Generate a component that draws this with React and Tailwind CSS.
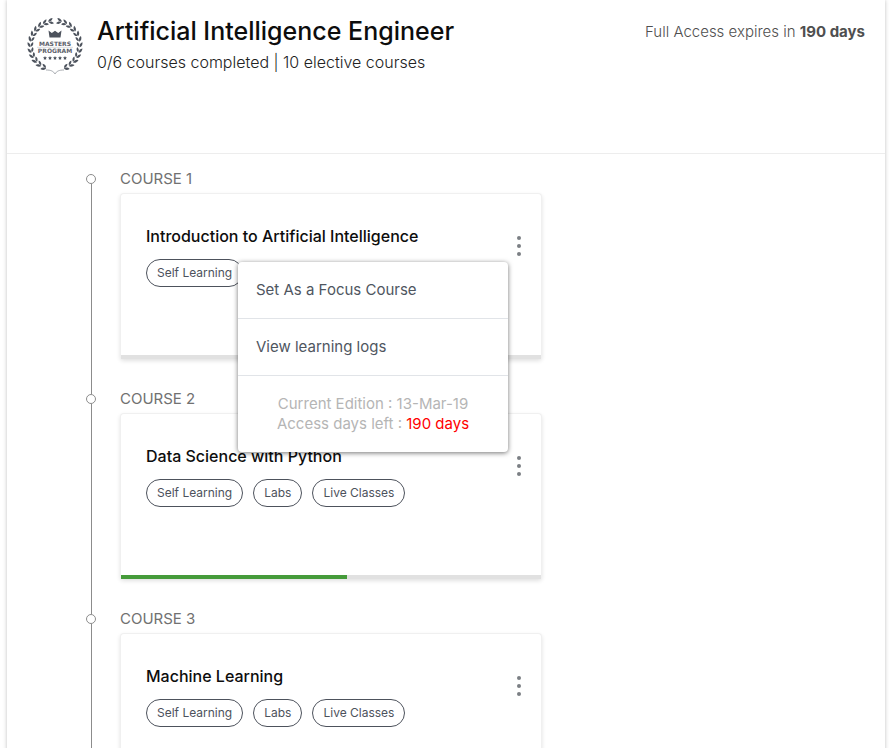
import React from "react";

const courses = [
  {
    title: "Introduction to Artificial Intelligence",
    tags: ["Self Learning"],
    progress: 0,
    menuOpen: true,
  },
  {
    title: "Data Science with Python",
    tags: ["Self Learning", "Labs", "Live Classes"],
    progress: 53.7,
  },
  {
    title: "Machine Learning",
    tags: ["Self Learning", "Labs", "Live Classes"],
    progress: 0,
  },
];

const leafAngles = [22, 35, 48, 61, 74, 87, 100, 113, 126, 139, 152, 165];

function LaurelSide() {
  return (
    <g>
      {leafAngles.map((angle) => (
        <g key={angle} transform={`rotate(${180 - angle} 28 28.5)`}>
          <path d="M28.500 3.800C27.600 1.400 25.400.9 23.200 1.300c.9 2.100 2.900 3.200 5.300 2.500z" />
          <path d="M28 4.300c-2-.5-3.800.5-4.700 2.500 2.200.5 4.100-.4 4.700-2.500z" />
        </g>
      ))}
    </g>
  );
}

function MastersBadge() {
  return (
    <svg viewBox="0 0 56 58" className="h-[58px] w-14 shrink-0" fill="#4d535d" role="img" aria-label="Masters Program">
      <g transform="translate(56 0) scale(-1 1)">
        <LaurelSide />
      </g>
      <LaurelSide />
      <path d="M19 53c5 0 7.500 1.200 9 4 1.500-2.800 4-4 9-4" fill="none" stroke="#8a8e95" strokeWidth="0.7" />
      <path d="M21.500 13.500l3.300 2.500L28 13.800l3.200 2.200 3.300-2.500-1 7h-11z" />
      <path d="M10 30.300h36" stroke="#b5b8bd" strokeWidth="0.5" />
      <g textAnchor="middle" fontFamily="'DejaVu Sans', sans-serif" fontSize="6" fontWeight="700" fill="#5b6069">
        <text x="28" y="28.500">MASTERS</text>
        <text x="28" y="36">PROGRAM</text>
      </g>
      {[18, 23, 28, 33, 38].map((x) => (
        <path
          key={x}
          transform={`translate(${x} 41)`}
          d="M0-2l.6 1.300 1.400.2-1.050.95.250 1.400L0 1.150-1.200 1.850l.250-1.400L-2-.5l1.400-.2z"
        />
      ))}
    </svg>
  );
}

function CourseMenu() {
  return (
    <div className="absolute top-[26px] right-full z-10 w-[270px] rounded-[4px] bg-white text-[15px] leading-5 text-[#4f565f] shadow-[0_1px_5px_rgba(0,0,0,0.55)]">
      <button type="button" className="block h-[57px] w-full border-b border-[#e1e4e8] px-[18px] text-left">
        Set As a Focus Course
      </button>
      <button type="button" className="block h-[57px] w-full border-b border-[#e1e4e8] px-[18px] text-left">
        View learning logs
      </button>
      <div className="py-[18px] text-center text-[#b5b5b5]">
        <p>Current Edition : 13-Mar-19</p>
        <p>
          Access days left : <span className="text-[#ff0000]">190 days</span>
        </p>
      </div>
    </div>
  );
}

function CourseCard({ course }) {
  return (
    <article className="mt-1 flex h-[166px] w-full max-w-[422px] flex-col rounded-[4px] border border-b-0 border-[#f0f0f0] bg-white shadow-[0_2px_4px_rgba(0,0,0,0.12)]">
      <div className="flex flex-1 justify-between pt-8 pr-[11px] pl-[25px]">
        <div>
          <h2 className="text-base leading-5 font-medium text-[#0d0d0d]">{course.title}</h2>
          <ul className="mt-[13px] flex gap-[10px]">
            {course.tags.map((tag) => (
              <li
                key={tag}
                className="flex h-7 items-center rounded-full border border-[#4d525c] px-[10px] text-xs whitespace-nowrap text-[#4d525c]"
              >
                {tag}
              </li>
            ))}
          </ul>
        </div>
        <div className="relative mt-[10px] h-5">
          <button
            type="button"
            aria-label={`Options for ${course.title}`}
            aria-expanded={Boolean(course.menuOpen)}
            className="flex h-5 w-[22px] flex-col items-center justify-between"
          >
            <span className="h-1 w-1 rounded-full bg-[#7b7f84]" />
            <span className="h-1 w-1 rounded-full bg-[#7b7f84]" />
            <span className="h-1 w-1 rounded-full bg-[#7b7f84]" />
          </button>
          {course.menuOpen && <CourseMenu />}
        </div>
      </div>
      <div className="h-1 bg-[#e1e1e1]">
        <div className="h-full bg-[#459b3a]" style={{ width: `${course.progress}%` }} />
      </div>
    </article>
  );
}

export default function App() {
  return (
    <div className="h-screen overflow-hidden bg-white font-[Inter,'Liberation_Sans',sans-serif]">
      <main className="mr-1 ml-[7px] min-h-full bg-white shadow-[0_0_4px_rgba(0,0,0,0.25)]">
        <header className="flex h-[154px] items-start justify-between border-b border-[#ededed] pt-[17px] pr-5 pl-5">
          <div className="flex gap-[14px]">
            <MastersBadge />
            <div>
              <h1 className="text-[25px] leading-7 font-medium text-[#0d0d0d]">Artificial Intelligence Engineer</h1>
              <p className="mt-[6px] text-base leading-[22px] font-light text-[#222222]">
                0/6 courses completed | 10 elective courses
              </p>
            </div>
          </div>
          <p className="mt-1 text-[15px] leading-[22px] font-light text-[#4f4f4f]">
            Full Access expires in <strong className="font-bold">190 days</strong>
          </p>
        </header>

        <ol className="pt-[15px] pr-5 pl-[79px]">
          {courses.map((course, index) => (
            <li key={course.title} className="flex gap-6">
              <div className="flex w-[10px] shrink-0 flex-col items-center">
                <span className={index === 0 ? "h-[5px] w-px" : "h-[5px] w-px bg-[#8c8c8c]"} />
                <span className="h-[10px] w-[10px] rounded-full border border-[#8c8c8c] bg-white" />
                <span className="w-px flex-1 bg-[#8c8c8c]" />
              </div>
              <section className="min-w-0 flex-1 pb-[30px]">
                <p className="text-[15px] leading-5 text-[#717171]">COURSE {index + 1}</p>
                <CourseCard course={course} />
              </section>
            </li>
          ))}
        </ol>
      </main>
    </div>
  );
}
